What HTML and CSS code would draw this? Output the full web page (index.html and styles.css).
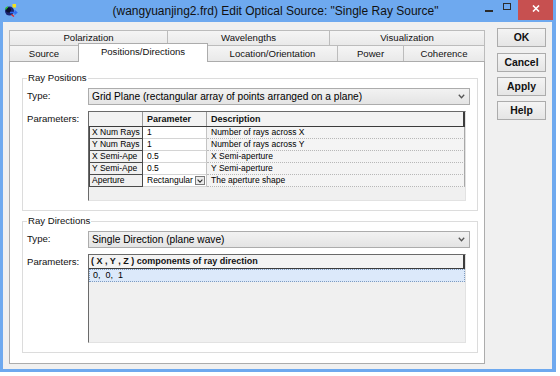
FILE: index.html
```html
<!DOCTYPE html>
<html>
<head>
<meta charset="utf-8">
<link rel="stylesheet" href="styles.css">
</head>
<body>
<div class="window">
  <div class="titlebar">
    <div class="icon-cell">
      <svg class="app-icon" width="14" height="14" viewBox="0 0 14 14">
        <circle cx="5.5" cy="8" r="4.5" fill="#1b2470"/>
        <circle cx="4.5" cy="7" r="2.5" fill="#0a0f2e"/>
        <path d="M1.5 6.5 Q2 4.5 4 4" stroke="#2fbf3a" stroke-width="1.4" fill="none"/>
        <rect x="8.5" y="1" width="3.5" height="3.5" fill="#f3e21b"/>
        <path d="M6 9.5 H12.5 M10.5 7.5 L12.8 9.5 L10.5 11.5" stroke="#2f6cf0" stroke-width="1.3" fill="none"/>
        <path d="M7.5 11.5 L10 13.5" stroke="#e02828" stroke-width="1.5"/>
      </svg>
    </div>
    <div class="title">(wangyuanjing2.frd) Edit Optical Source: "Single Ray Source"</div>
    <div class="controls">
      <span class="ctl-min"></span>
      <span class="ctl-max"></span>
      <span class="ctl-close">
        <svg width="8" height="7" viewBox="0 0 8 7"><path d="M1 0.5 L7 6.5 M7 0.5 L1 6.5" stroke="#fff" stroke-width="1.6"/></svg>
      </span>
    </div>
  </div>
  <div class="client">
    <div class="tabctl">
      <div class="tabrow">
        <div class="tab w-pol">Polarization</div>
        <div class="tab w-wav">Wavelengths</div>
        <div class="tab w-vis">Visualization</div>
      </div>
      <div class="tabrow front">
        <div class="tab w-src">Source</div>
        <div class="tab w-pd selected">Positions/Directions</div>
        <div class="tab w-lo">Location/Orientation</div>
        <div class="tab w-pow">Power</div>
        <div class="tab w-coh">Coherence</div>
      </div>
      <div class="panel">
        <div class="group g1">
          <div class="group-title">Ray Positions</div>
          <div class="lbl lbl-type">Type:</div>
          <div class="combo"><span>Grid Plane (rectangular array of points arranged on a plane)</span>
            <svg width="7" height="5" viewBox="0 0 7 5"><path d="M0.8 0.8 L3.5 3.8 L6.2 0.8" stroke="#555" stroke-width="1.3" fill="none"/></svg>
          </div>
          <div class="lbl lbl-par">Parameters:</div>
          <div class="grid grid1">
            <div class="hrow cols3">
              <div class="hcell"></div>
              <div class="hcell">Parameter</div>
              <div class="hcell last">Description</div>
            </div>
            <div class="drow cols3">
              <div class="rh">X Num Rays</div><div class="pv">1</div><div class="dv">Number of rays across X</div>
            </div>
            <div class="drow cols3">
              <div class="rh">Y Num Rays</div><div class="pv">1</div><div class="dv">Number of rays across Y</div>
            </div>
            <div class="drow cols3">
              <div class="rh">X Semi-Ape</div><div class="pv">0.5</div><div class="dv">X Semi-aperture</div>
            </div>
            <div class="drow cols3">
              <div class="rh">Y Semi-Ape</div><div class="pv">0.5</div><div class="dv">Y Semi-aperture</div>
            </div>
            <div class="drow cols3">
              <div class="rh">Aperture</div>
              <div class="pv pv-drop"><span>Rectangular</span>
                <span class="mini-drop"><svg width="6" height="4" viewBox="0 0 6 4"><path d="M0.6 0.6 L3 3.2 L5.4 0.6" stroke="#333" stroke-width="1.1" fill="none"/></svg></span>
              </div>
              <div class="dv">The aperture shape</div>
            </div>
          </div>
        </div>
        <div class="group g2">
          <div class="group-title">Ray Directions</div>
          <div class="lbl lbl-type">Type:</div>
          <div class="combo"><span>Single Direction (plane wave)</span>
            <svg width="7" height="5" viewBox="0 0 7 5"><path d="M0.8 0.8 L3.5 3.8 L6.2 0.8" stroke="#555" stroke-width="1.3" fill="none"/></svg>
          </div>
          <div class="lbl lbl-par">Parameters:</div>
          <div class="grid grid2">
            <div class="hrow">
              <div class="hcell last wide">( X , Y , Z ) components of ray direction</div>
            </div>
            <div class="vecrow">0,  0,  1</div>
          </div>
        </div>
      </div>
    </div>
    <div class="btns">
      <div class="btn">OK</div>
      <div class="btn btn-cancel">Cancel</div>
      <div class="btn">Apply</div>
      <div class="btn">Help</div>
    </div>
  </div>
</div>
</body>
</html>
```

FILE: styles.css
```css
html, body {
  margin: 0;
  padding: 0;
  background: #ffffff;
  font-family: "Liberation Sans", Arial, sans-serif;
  color: #000;
}

.window {
  width: 556px;
  height: 372px;
  background: #6ea9ef;
  display: flex;
  flex-direction: column;
}

.titlebar {
  height: 22px;
  display: grid;
  grid-template-columns: 72px 1fr 72px;
}

.icon-cell {
  padding: 3px 0 0 4px;
}

.app-icon {
  display: block;
}

.title {
  text-align: center;
  font-size: 12px;
  line-height: 23px;
  white-space: nowrap;
  padding-right: 5px;
  color: #111;
}

.controls {
  display: flex;
  justify-content: flex-end;
  align-items: flex-start;
}

.ctl-min {
  width: 8px;
  height: 2px;
  background: #2b2b2b;
  margin-top: 10px;
  margin-right: 10px;
}

.ctl-max {
  width: 8px;
  height: 7px;
  box-sizing: border-box;
  border: 1px solid #2b2b2b;
  margin-top: 3px;
  margin-right: 7px;
}

.ctl-close {
  width: 35px;
  height: 20px;
  background: #c75050;
  margin-right: 3px;
  display: flex;
  justify-content: center;
  padding-top: 5px;
  box-sizing: border-box;
}

.ctl-close svg {
  display: block;
}

.client {
  flex: 1;
  margin: 0 4px 3px 3px;
  background: #f0f0f0;
  display: flex;
  gap: 12px;
  padding: 6px 0 0 6px;
}

.tabctl {
  width: 476px;
  margin-top: 2px;
  display: flex;
  flex-direction: column;
}

.tabrow {
  display: flex;
  height: 15px;
  align-items: flex-end;
}

.tabrow.front {
  height: 16px;
}

.tab {
  box-sizing: border-box;
  height: 100%;
  border: 1px solid #bcbcbc;
  border-bottom: none;
  background: linear-gradient(#f5f5f5, #e9e9e9);
  font-size: 9.6px;
  line-height: 14px;
  text-align: center;
  white-space: nowrap;
  color: #111;
}

.tab + .tab {
  margin-left: -1px;
}

.tabrow.front .tab {
  line-height: 15px;
}

.tab.selected {
  position: relative;
  z-index: 1;
  height: 19px;
  margin-bottom: -1px;
  background: #ffffff;
  border-color: #acacac;
  line-height: 16px;
}

.w-pol { width: 159px; }
.w-wav { width: 163px; }
.w-vis { width: 156px; }
.w-src { width: 70px; }
.w-pd { width: 130px; }
.w-lo { width: 131px; }
.w-pow { width: 67px; }
.w-coh { width: 82px; }

.panel {
  height: 303px;
  box-sizing: border-box;
  border: 1px solid #acacac;
  background: #ffffff;
  padding: 16px 6px 10px 12px;
  display: flex;
  flex-direction: column;
  gap: 10px;
}

.group {
  position: relative;
  box-sizing: border-box;
  border: 1px solid #dcdcdc;
  padding: 9px 7px 9px 4px;
  display: grid;
  grid-template-columns: 61px 1fr;
  row-gap: 6px;
}

.g1 { height: 133px; }
.g2 { height: 132px; }

.group-title {
  position: absolute;
  top: -7px;
  left: 4px;
  background: #ffffff;
  padding: 0 1px;
  font-size: 9.6px;
  line-height: 12px;
  color: #111;
}

.lbl {
  font-size: 9.6px;
  color: #111;
}

.lbl-type {
  line-height: 16px;
}

.lbl-par {
  line-height: 12px;
  padding-top: 2px;
}

.combo {
  height: 17px;
  box-sizing: border-box;
  border: 1px solid #acacac;
  background: linear-gradient(#f2f2f2, #e4e4e4);
  display: flex;
  align-items: center;
  justify-content: space-between;
  padding: 0 4px 0 3px;
  font-size: 10.2px;
  white-space: nowrap;
}

.combo svg {
  display: block;
}

.grid {
  width: 378px;
  box-sizing: border-box;
  background: #f0f0f0;
  border-left: 1px solid #6a6a6a;
  border-top: 1px solid #6a6a6a;
  border-right: 1px solid #e2e2e2;
  border-bottom: 1px solid #e2e2e2;
  display: flex;
  flex-direction: column;
}

.grid1 { height: 90px; }
.grid2 { height: 89px; }

.cols3 {
  display: grid;
  grid-template-columns: 54px 64px 1fr;
}

.hrow {
  height: 15px;
  box-sizing: border-box;
  border-bottom: 1px solid #3c3c3c;
  background: #f3f3f3;
}

.grid2 .hrow {
  display: flex;
  height: 14px;
}

.hcell {
  box-sizing: border-box;
  border-right: 1px solid #9a9a9a;
  font-size: 9px;
  font-weight: bold;
  line-height: 14px;
  padding-left: 4px;
  white-space: nowrap;
  color: #111;
}

.hcell.last {
  border-right: 2px solid #3c3c3c;
}

.hcell.wide {
  flex: 1;
  padding-left: 2px;
  line-height: 13px;
}

.drow {
  height: 12px;
  font-size: 8.5px;
  line-height: 11px;
  white-space: nowrap;
}

.rh {
  box-sizing: border-box;
  background: #f0f0f0;
  border-left: 1px solid #4a4a4a;
  border-right: 1px solid #4a4a4a;
  border-bottom: 1px solid #4a4a4a;
  padding-left: 2px;
}

.pv {
  box-sizing: border-box;
  background: #ffffff;
  border-right: 1px solid #c4c4c4;
  border-bottom: 1px solid #d4d4d4;
  padding-left: 4px;
}

.pv-drop {
  display: flex;
  justify-content: space-between;
  align-items: center;
  padding-right: 1px;
}

.mini-drop {
  width: 10px;
  height: 9px;
  box-sizing: border-box;
  border: 1px solid #7a7a7a;
  background: #ececec;
  display: flex;
  align-items: center;
  justify-content: center;
}

.mini-drop svg {
  display: block;
}

.dv {
  box-sizing: border-box;
  background: #f4f4f4;
  border-right: 1px solid #a8a8a8;
  border-bottom: 1px dotted #b8b8b8;
  padding-left: 4px;
}

.vecrow {
  height: 13px;
  box-sizing: border-box;
  background: #dce9fa;
  border: 1px dotted #7f9cc0;
  font-size: 9px;
  line-height: 11px;
  padding-left: 3px;
  white-space: pre;
}

.btns {
  width: 49px;
  display: flex;
  flex-direction: column;
  gap: 5px;
}

.btn {
  height: 19px;
  box-sizing: border-box;
  border: 1px solid #acacac;
  background: linear-gradient(#f4f4f4, #e5e5e5);
  font-size: 10.4px;
  font-weight: bold;
  line-height: 17px;
  text-align: center;
  color: #111;
}

.btn-cancel {
  margin-top: 1px;
}
```
